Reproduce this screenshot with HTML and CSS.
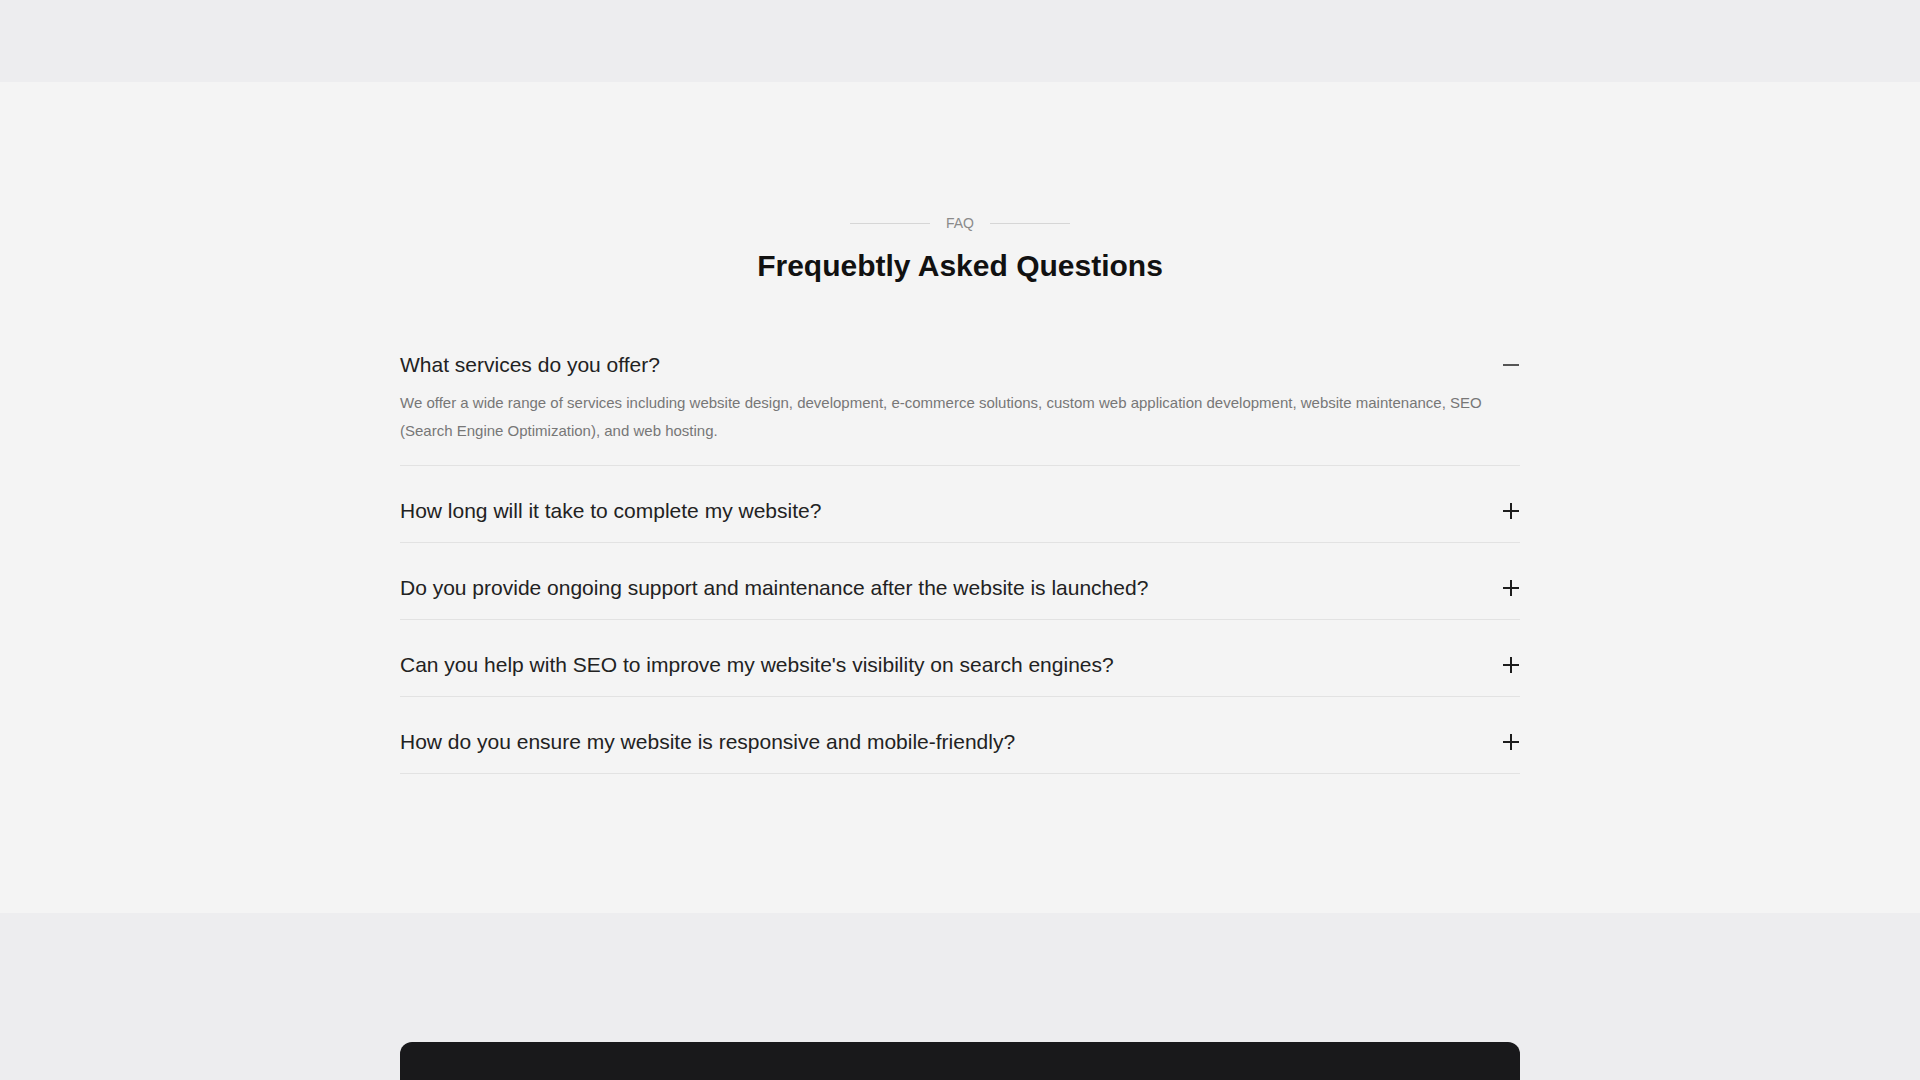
FILE: index.html
```html
<!DOCTYPE html>
<html lang="en">
<head>
  <meta charset="UTF-8">
  <meta name="viewport" content="width=device-width, initial-scale=1.0">
  <title>FAQ</title>
  <link rel="stylesheet" href="styles.css">
</head>
<body>
  <div class="top-band"></div>

  <section class="faq">
    <div class="container">
      <div class="section-label">
        <span class="label-line"></span>
        <span class="label-text">FAQ</span>
        <span class="label-line"></span>
      </div>
      <h2 class="section-title">Frequebtly Asked Questions</h2>

      <div class="faq-list">
        <div class="faq-item open">
          <div class="faq-question">
            <span>What services do you offer?</span>
            <svg class="faq-icon" viewBox="0 0 16 16"><path d="M0 8h16"/></svg>
          </div>
          <p class="faq-answer">We offer a wide range of services including website design, development, e-commerce solutions, custom web application development, website maintenance, SEO (Search Engine Optimization), and web hosting.</p>
        </div>
        <div class="faq-item">
          <div class="faq-question">
            <span>How long will it take to complete my website?</span>
            <svg class="faq-icon" viewBox="0 0 16 16"><path d="M0 8h16M8 0v16"/></svg>
          </div>
          <p class="faq-answer">Most websites take between four and eight weeks, depending on the size of the project and how quickly content is provided.</p>
        </div>
        <div class="faq-item">
          <div class="faq-question">
            <span>Do you provide ongoing support and maintenance after the website is launched?</span>
            <svg class="faq-icon" viewBox="0 0 16 16"><path d="M0 8h16M8 0v16"/></svg>
          </div>
          <p class="faq-answer">Yes, we offer monthly maintenance plans covering updates, backups, security checks and small content changes.</p>
        </div>
        <div class="faq-item">
          <div class="faq-question">
            <span>Can you help with SEO to improve my website's visibility on search engines?</span>
            <svg class="faq-icon" viewBox="0 0 16 16"><path d="M0 8h16M8 0v16"/></svg>
          </div>
          <p class="faq-answer">Absolutely. We handle on-page optimization, technical SEO, site speed and keyword research.</p>
        </div>
        <div class="faq-item">
          <div class="faq-question">
            <span>How do you ensure my website is responsive and mobile-friendly?</span>
            <svg class="faq-icon" viewBox="0 0 16 16"><path d="M0 8h16M8 0v16"/></svg>
          </div>
          <p class="faq-answer">Every layout is built mobile-first and tested on a range of phones, tablets and desktop browsers.</p>
        </div>
      </div>
    </div>
  </section>

  <section class="cta">
    <div class="container">
      <div class="cta-card"></div>
    </div>
  </section>

  <script>
    const items = document.querySelectorAll('.faq-item');

    // Buka satu item, tutup yang lain
    items.forEach(function (item) {
      item.querySelector('.faq-question').addEventListener('click', function () {
        const wasOpen = item.classList.contains('open');
        items.forEach(function (other) {
          other.classList.remove('open');
          other.querySelector('.faq-icon path').setAttribute('d', 'M0 8h16M8 0v16');
        });
        if (!wasOpen) {
          item.classList.add('open');
          item.querySelector('.faq-icon path').setAttribute('d', 'M0 8h16');
        }
      });
    });
  </script>
</body>
</html>
```

FILE: styles.css
```css
* {
  margin: 0;
  padding: 0;
  box-sizing: border-box;
}

html::-webkit-scrollbar {
  width: 3px;
}

html::-webkit-scrollbar-track,
html::-webkit-scrollbar-thumb {
  background-color: #dadada;
}

body {
  font-family: 'Liberation Sans', Arial, sans-serif;
  background-color: #ededef;
  color: #222;
}

.container {
  width: 1120px;
  margin: 0 auto;
}

.top-band {
  height: 82px;
  background-color: #ededef;
}

.faq {
  background-color: #f4f4f4;
  padding: 131px 0 139px;
}

.section-label {
  display: flex;
  align-items: center;
  justify-content: center;
  gap: 16px;
  height: 20px;
}

.label-line {
  width: 80px;
  height: 1px;
  background-color: #d6d6d6;
}

.label-text {
  font-size: 14px;
  color: #8a8a8a;
  line-height: 20px;
}

.section-title {
  margin-top: 13px;
  text-align: center;
  font-size: 30px;
  line-height: 40px;
  font-weight: bold;
  color: #111;
}

.faq-list {
  margin-top: 38px;
}

.faq-item {
  padding: 30px 0 16px;
  border-bottom: 1px solid #e2e2e2;
}

.faq-item.open {
  padding-top: 26px;
}

.faq-question {
  display: flex;
  align-items: center;
  justify-content: space-between;
  gap: 20px;
  font-size: 21px;
  line-height: 30px;
  color: #222;
  cursor: pointer;
}

.faq-icon {
  flex-shrink: 0;
  width: 16px;
  height: 16px;
  margin-right: 1px;
  fill: none;
  stroke: #1c1c1c;
  stroke-width: 2;
}

.faq-item.open .faq-icon {
  stroke: #555;
}

.faq-answer {
  display: none;
  margin: 9px 0 4px;
  padding-right: 20px;
  font-size: 15px;
  line-height: 28px;
  color: #777;
}

.faq-item.open .faq-answer {
  display: block;
}

.cta {
  padding-top: 129px;
}

.cta-card {
  height: 320px;
  background-color: #19191b;
  border-radius: 12px 12px 0 0;
}
```
